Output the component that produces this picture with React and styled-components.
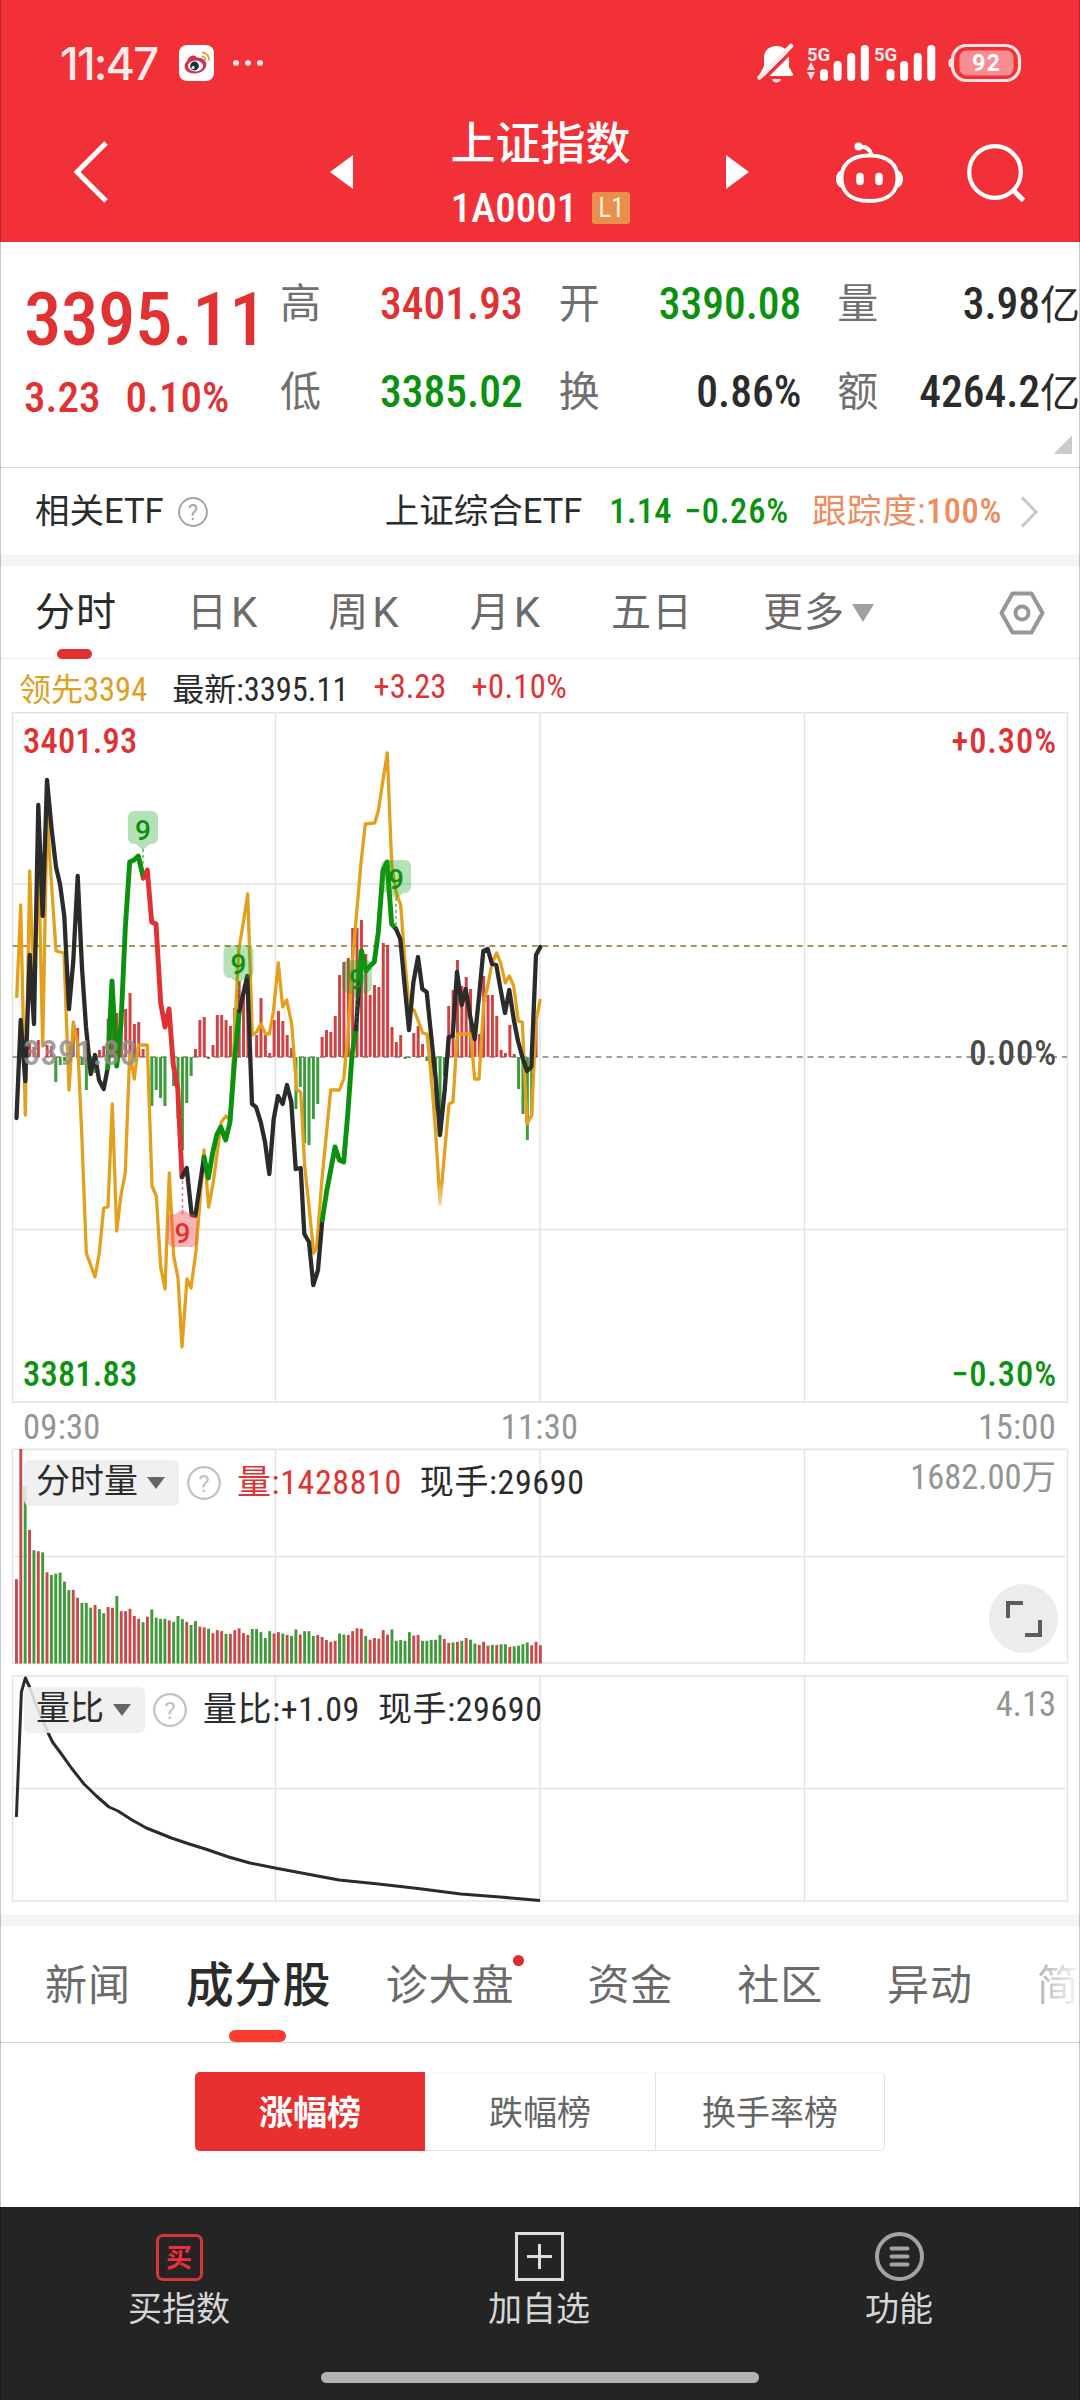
import React from 'react';
import styled, { createGlobalStyle } from 'styled-components';

const RED = '#e03133';
const GREEN = '#0a910e';
const INK = '#2b2b2b';
const GREY = '#959595';
const GRID = '#e3e3e3';

const GlobalStyle = createGlobalStyle`
  * {
    box-sizing: border-box;
  }

  body {
    margin: 0;
    background: #ffffff;
    font-family: 'Roboto Condensed', 'Noto Sans CJK SC', sans-serif;
    color: ${INK};
  }

  svg {
    display: block;
    flex: none;
  }
`;

const Screen = styled.div`
  position: relative;
  display: flex;
  flex-direction: column;
  width: 1080px;
  height: 2400px;
  overflow: hidden;
  white-space: nowrap;

  &::after {
    content: '';
    position: absolute;
    inset: 0;
    border: solid rgba(0, 0, 0, 0.22);
    border-width: 0 1px;
    pointer-events: none;
  }
`;

/* ---------- header ---------- */

const Header = styled.header`
  height: 242px;
  background: #f13037;
  color: #ffffff;
`;

const StatusBar = styled.div`
  display: flex;
  align-items: center;
  height: 110px;
  padding: 16px 58px 0 60px;
`;

const Clock = styled.span`
  width: 119px;
  font-family: Inter, Roboto, sans-serif;
  font-size: 45px;
  font-weight: 500;
  letter-spacing: -1.8px;
  color: #ffe9ea;
`;

const Dots = styled.span`
  display: flex;
  gap: 6px;
  margin-left: 19px;

  i {
    width: 6px;
    height: 6px;
    border-radius: 50%;
    background: #ffe3e4;
  }
`;

const StatusIcons = styled.div`
  display: flex;
  align-items: center;
  gap: 11px;
  margin-left: auto;
`;

const NavBar = styled.div`
  display: flex;
  align-items: center;
  height: 132px;
  padding: 0 50px 9px 74px;
`;

const Arrow = styled.span`
  width: 0;
  height: 0;
  border: solid transparent;
  border-width: 17px 0;
  ${({ $left }) =>
    $left
      ? 'border-right: 23px solid #fff; margin-left: 222px;'
      : 'border-left: 23px solid #fff; margin-right: 87px;'}
`;

const TitleBlock = styled.div`
  display: flex;
  flex-direction: column;
  align-items: center;
  width: 373px;
  padding-left: 2px;
  margin-top: 5px;
`;

const Title = styled.h1`
  margin: 0;
  font-size: 45px;
  font-weight: 500;
  line-height: 60px;
`;

const Code = styled.div`
  display: flex;
  align-items: center;
  gap: 15px;
  margin-top: 8px;
  font-size: 41px;
  font-weight: 500;
  line-height: 50px;
`;

const Level = styled.span`
  width: 38px;
  height: 32px;
  border-radius: 3px;
  background: #e8904b;
  color: #ffeede;
  font-size: 27px;
  font-weight: 400;
  line-height: 33px;
  text-align: center;
`;

const NavIcons = styled.div`
  display: flex;
  gap: 64px;
  padding-top: 3px;
`;

/* ---------- quote ---------- */

const Quote = styled.section`
  position: relative;
  display: flex;
  height: 226px;
  border-bottom: 1px solid #dcdcdc;
`;

const PriceColumn = styled.div`
  width: 280px;
  padding: 37px 0 0 24px;
  color: ${RED};
`;

const Price = styled.div`
  font-size: 75px;
  font-weight: 550;
  line-height: 80px;
  letter-spacing: -0.5px;
`;

const Change = styled.div`
  display: flex;
  gap: 25px;
  margin-top: 8px;
  font-size: 43px;
  font-weight: 480;
  line-height: 60px;
`;

const Stats = styled.div`
  flex: 1;
  display: grid;
  grid-template-columns: repeat(3, 1fr);
  grid-auto-rows: 88px;
  column-gap: 36px;
  padding-top: 19px;
`;

const Stat = styled.div`
  display: flex;
  justify-content: space-between;
  font-size: 43.5px;
  font-weight: 490;
  line-height: 88px;
  color: ${({ $color }) => $color};

  label {
    font-size: 41px;
    font-weight: 400;
    line-height: 87px;
    color: #707070;
  }
`;

const Unit = styled.span`
  font-size: 40px;
  font-weight: 400;
`;

const Corner = styled.i`
  position: absolute;
  right: 8px;
  bottom: 13px;
  width: 18px;
  height: 18px;
  background: linear-gradient(135deg, transparent 50%, #cccccc 50%);
`;

const EtfRow = styled.section`
  display: flex;
  align-items: center;
  height: 87px;
  padding: 0 42px 0 35px;
`;

const EtfName = styled.span`
  font-family: Roboto, 'Noto Sans CJK SC', sans-serif;
  font-size: 34.5px;
  line-height: 40px;
  margin: 0 ${({ $gap }) => $gap}px 2px ${({ $push }) => ($push ? 'auto' : 0)};
`;

const Figure = styled.span`
  font-size: 34.5px;
  font-weight: 480;
  line-height: 40px;
  letter-spacing: ${({ $track = 0.3 }) => $track}px;
  color: ${({ $color }) => $color};
  margin: 0 ${({ $gap = 0 }) => $gap}px 2px 0;

  em {
    font-style: normal;
    font-weight: 400;
  }
`;

const Band = styled.div`
  flex: none;
  height: 11px;
  background: #f4f4f4;
`;

/* ---------- period tabs ---------- */

const PeriodTabs = styled.nav`
  display: flex;
  align-items: center;
  gap: 70px;
  height: 93px;
  padding: 2px 35px 0 35px;
  border-bottom: 1px solid #ececec;
`;

const Period = styled.span`
  position: relative;
  display: flex;
  align-items: center;
  font-family: Roboto, 'Noto Sans CJK SC', sans-serif;
  font-size: 40px;
  line-height: 92px;
  letter-spacing: 1px;
  color: ${({ $active }) => ($active ? INK : '#6b6b6b')};

  &::after {
    content: '';
    display: ${({ $active }) => ($active ? 'block' : 'none')};
    position: absolute;
    left: 22px;
    bottom: 0;
    width: 35px;
    height: 10px;
    border-radius: 5px;
    background: #e43031;
  }

  b {
    margin-left: 3px;
    font-size: 42px;
    font-weight: 400;
  }
`;

const Caret = styled.i`
  border: solid transparent;
  border-width: ${({ $h }) => $h}px ${({ $w }) => $w / 2}px 0;
  border-top-color: ${({ $color }) => $color};
  margin-left: ${({ $gap }) => $gap}px;
`;

const SettingIcon = styled.svg`
  margin-left: auto;
`;

/* ---------- charts ---------- */

const Legend = styled.div`
  display: flex;
  align-items: center;
  gap: 25px;
  height: 53px;
  padding: 2px 0 0 19px;
  font-size: 32.5px;
`;

const LegendItem = styled.span`
  font-weight: 450;
  letter-spacing: ${({ $track = 0 }) => $track}px;
  color: ${({ $color }) => $color};

  em {
    font-size: 32px;
    font-style: normal;
    font-weight: 400;
  }
`;

const Axis = styled.div`
  display: flex;
  justify-content: space-between;
  align-items: center;
  height: 45px;
  padding: 2px 24px 0 23px;
  font-size: 34.5px;
  font-weight: 430;
  letter-spacing: 0.3px;
  color: ${GREY};
`;

const ChartBox = styled.div`
  position: relative;
  height: ${({ $height }) => $height}px;
  margin-bottom: ${({ $gap = 0 }) => $gap}px;
`;

const ChartHead = styled.div`
  position: absolute;
  top: 12px;
  left: 24px;
  right: 24px;
  display: flex;
  align-items: center;
  height: 46px;
  font-size: 34px;
  font-weight: 450;
  line-height: 46px;

  em {
    font-style: normal;
    font-weight: 400;
  }
`;

const Picker = styled.span`
  display: flex;
  align-items: center;
  height: 46px;
  padding: 0 14px 0 12px;
  margin-right: 8px;
  border-radius: 6px;
  background: rgba(238, 238, 238, 0.88);
  font-weight: 400;
  line-height: 43px;

  span {
    padding-bottom: 3px;
  }
`;

const Reading = styled.span`
  padding-bottom: 3px;
  margin-left: ${({ $left }) => $left}px;
  letter-spacing: 0.6px;
  color: ${({ $color = INK }) => $color};
`;

const Peak = styled.span`
  align-self: flex-start;
  margin-left: auto;
  line-height: 34px;
  font-size: 34.5px;
  font-weight: 420;
  color: ${GREY};
`;

const Expand = styled.button`
  position: absolute;
  right: 22px;
  bottom: 12px;
  display: grid;
  place-items: center;
  width: 69px;
  height: 69px;
  padding: 0;
  border: 0;
  border-radius: 50%;
  background: #ececec;
`;

/* ---------- lower part ---------- */

const SectionTabs = styled.nav`
  display: flex;
  align-items: center;
  gap: 64px;
  height: 117px;
  padding: 3px 0 0 45px;
  border-bottom: 1px solid #d5d5d5;
`;

const SectionTab = styled.span`
  position: relative;
  flex: none;
  margin: 0 ${({ $active, $dot }) => ($active ? '-9px' : $dot ? '9px' : 0)} 0
    ${({ $active }) => ($active ? '-9px' : 0)};
  font-size: ${({ $active }) => ($active ? 48 : 42)}px;
  font-weight: ${({ $active }) => ($active ? 500 : 400)};
  line-height: 113px;
  letter-spacing: ${({ $active }) => ($active ? 0.3 : 0.9)}px;
  color: ${({ $active }) => ($active ? INK : '#6b6b6b')};

  ${({ $fade }) =>
    $fade &&
    `
    background: linear-gradient(90deg, #b4b4b4, #f4f4f4 92%);
    background-clip: text;
    color: transparent;
  `}

  &::after {
    content: '';
    position: absolute;
    ${({ $active, $dot }) =>
      $active
        ? 'left: 43px; bottom: 0; width: 57px; height: 12px; border-radius: 6px; background: #fa3b30;'
        : $dot
          ? 'right: -10px; top: 26px; width: 11px; height: 11px; border-radius: 50%; background: #e02b2b;'
          : 'display: none;'}
  }
`;

const Ranking = styled.section`
  flex: 1;
  display: flex;
  justify-content: center;
  align-items: flex-start;
  padding-top: 29px;
`;

const Segment = styled.button`
  width: 230px;
  height: 79px;
  padding: 0 0 3px;
  border: 1px solid #e0e0e0;
  border-left-width: ${({ $last }) => ($last ? 1 : 0)}px;
  border-right-width: ${({ $last }) => ($last ? 1 : 0)}px;
  border-top-color: #f8f8f8;
  border-radius: ${({ $active, $last }) =>
    $active ? '5px 0 0 5px' : $last ? '0 5px 5px 0' : 0};
  background: ${({ $active }) => ($active ? '#e83031' : '#ffffff')};
  ${({ $active }) => $active && 'border-color: #e83031;'}
  color: ${({ $active }) => ($active ? '#ffffff' : '#666666')};
  font-family: inherit;
  font-size: 34px;
  font-weight: ${({ $active }) => ($active ? 700 : 400)};
`;

const BottomBar = styled.footer`
  height: 193px;
  background: #242424;
`;

const Actions = styled.div`
  display: grid;
  grid-template-columns: repeat(3, 1fr);
  height: 165px;
`;

const Action = styled.div`
  display: flex;
  flex-direction: column;
  align-items: center;
  gap: 7px;
  padding: 25px 2px 0 0;
  font-size: 34px;
  line-height: 42px;
  color: #d6d6d6;
`;

const BuyBadge = styled.span`
  width: 47px;
  height: 47px;
  margin: 2px 0 0;
  border: 3px solid #d5353c;
  border-radius: 7px;
  color: #ee2f3f;
  font-size: 26px;
  font-weight: 700;
  line-height: 42px;
  text-align: center;
`;

const HomeBar = styled.div`
  width: 438px;
  height: 11px;
  margin: 0 auto;
  border-radius: 6px;
  background: #b3b3b3;
`;

/* ---------- data ---------- */

const STATS = [
  { label: '高', value: '3401.93', color: RED },
  { label: '开', value: '3390.08', color: GREEN },
  { label: '量', value: '3.98', unit: '亿', color: INK },
  { label: '低', value: '3385.02', color: GREEN },
  { label: '换', value: '0.86%', color: INK },
  { label: '额', value: '4264.2', unit: '亿', color: INK },
];

const STEP = 4.366;
const FIRST = 16.5;

// the price line changes colour along each nine-turn run
const PRICE_RUNS = [
  [INK, '16.5,1118 20.7,1020 25.3,1081 29.7,955 34,1024 38.3,805 42.7,916 47,780 51.5,828 56,867 60,884 64.3,916 69,1009 73.3,961 77.7,876 82,968 86,1027 90.7,1074 95,1055 99,1080 103.7,1089 107.7,1068'],
  [GREEN, '107.7,1068 112,981 116.7,1066 121,1024 125.3,928 129.7,862 134,860 138.3,856 143.3,878'],
  [RED, '143.3,878 147.3,870 151.7,922 156,924 160.7,1003 165,1027 169,1009 173.3,1065 177.7,1088 182,1177'],
  [INK, '182,1177 186.7,1168 191.7,1215 195.3,1216 199.3,1189 204,1157'],
  [GREEN, '204,1157 208.3,1178 212.7,1153 216.7,1135 220.7,1127 225.7,1140 230,1122 234.3,1064 239.3,1011'],
  [INK, '239.3,1011 247.3,976 252,1104 256,1107 260.7,1122 265,1142 269.3,1174 273.7,1119 278,1096 282.7,1104 287,1085 291.3,1102 295.7,1169 300.7,1168 304.3,1234 309,1242 313.3,1285 318,1270 322.3,1220'],
  [GREEN, '322.3,1220 326.7,1191 330.7,1170 335,1147 339.3,1160 343.7,1162 348,1111 352,1055 356,1029'],
  [INK, '356,1029 361,960'],
  [GREEN, '359,977 361.5,951 366,971 370,966 374.3,962 378.3,932 383,870 387,862 391.7,924 396,929'],
  [INK, '396,929 400.3,939 404.7,986 409,1030 413.3,983 418,957 422.3,989 426.7,992 431.3,1037 435.7,1079 440,1135 444.7,1090 448.7,1037 452.7,1036 457,972 461.7,1005 465.7,989 470.3,1017 474.7,1039 479,997 483.3,951 487.7,949 492,964 496.3,965 500.7,990 505,1013 509.3,990 513.7,1019 518,1041 522.3,1057 527,1071 531.3,1067 536,955 540.3,947'],
];

const LEADING =
  '16.7,998 20.7,905 25.3,1115 29.7,871 34,1000 38.3,850 42.7,1046 47,815 51.7,887 56,951 64,953 69,1090 73.3,1022 77.7,1044 82,1140 86.3,1253 95,1277 99.3,1253 103.7,1208 108,1207 112.3,1104 116.7,1231 121,1195 125.3,1173 129.7,1053 134.3,1079 138.3,1045 147.3,1045 152,1186 156.3,1196 160.7,1267 165,1289 169.3,1173 173.7,1256 178,1278 182,1347 187,1279 191,1288 196,1251 204,1150 208.7,1207 213.3,1182 221.3,1122 226,1116 230,1120 234.3,1039 238.7,950 243.3,923 247.7,894 252.3,1035 256.7,1032 260.7,1024 265.7,1034 269.3,1034 273.3,1012 278.3,963 282.7,1007 286.7,1000 291.7,1024 296.7,1090 300.7,1092 304.7,1166 309.3,1209 313.7,1253 316.7,1247 321.7,1182 330.7,1090 339.3,1090 343.7,1079 348,1035 352.3,963 361,863 365.3,824 374.7,823 378.3,811 382.7,782 387.3,753 391.7,865 396,892 400.7,905 404.7,959 409.3,1008 414,1010 418.3,1021 422.7,1033 427,1034 431.3,1077 435.7,1133 440,1204 444.7,1151 449,1104 453,1102 457.3,1034 470.7,1034 474.7,1079 479,1079 483.7,1003 487.7,986 492,963 496.7,953 500.7,963 505.3,983 509.3,976 513.7,986 518.3,1021 522.3,1022 527,1124 531.7,1115 536,1021 540.3,999';

const MOMENTUM = [
  0, 0, 0, 14, 10, 17, 0, 12, 11, -25, -8, -4, 11, 22, 29, -8, -33, -13, -16, 7,
  11, 38, 40, 44, 29, 48, 64, 33, 35, 8, 0, -49, -33, -41, -49, 0, -29, -62, -93, -46,
  -19, 8, 37, 40, -2, 12, 42, 42, 37, 31, 49, 76, 67, 78, 0, 22, 59, 22, 4, 37,
  46, 36, 22, 9, -52, -30, -86, -88, -62, -47, 20, 27, 25, 41, 82, 95, 99, 129, 129, 137,
  103, 62, 72, 70, 114, 112, 30, 15, 22, -2, -1, 24, 31, 13, -4, -25, -54, -71, -19, 51,
  67, 97, 71, 80, 68, 18, 23, 81, 62, 62, 41, 7, 4, 32, 3, -32, -57, -83, -58, 36,
];

const VOLUME = [
  245, 623, 515, 388, 329, 326, 323, 265, 257, 261, 264, 238, 213, 214, 191, 176, 176, 162, 170, 158,
  146, 164, 162, 196, 152, 152, 159, 138, 130, 120, 136, 157, 133, 130, 130, 125, 121, 138, 129, 121,
  112, 123, 107, 105, 101, 88, 97, 94, 86, 86, 97, 102, 88, 83, 100, 100, 91, 74, 94, 87,
  91, 87, 83, 80, 99, 84, 94, 94, 80, 83, 77, 68, 63, 66, 87, 84, 83, 94, 102, 101,
  80, 69, 74, 72, 97, 84, 99, 66, 68, 66, 91, 81, 83, 66, 66, 68, 69, 83, 71, 60,
  61, 63, 66, 74, 69, 58, 54, 63, 52, 54, 54, 56, 56, 48, 50, 52, 56, 61, 53, 63, 53,
];

const VOLUME_SIDE =
  'rrgrgrgrgggggrrgggrggrrgrrrrrgrggggrgggrggrrgrrrgrrrrrgggggrrgrggrgggrrrrrggrrrrgrrrrrgggggrrgggggrrgrgrggrrrgrggrggggrrr';

const RATIO =
  '16.4,142 21.4,17 25.4,3 29.6,12 34,25 48.2,58 52.5,67 60.7,78 71.4,93 84,109 96.4,121 109,132 118,136 132,145 146.4,153 171.4,163 189.3,169 207,174.5 228.6,182 250,188 275,193 307,199 339,205 378.6,209 418,213.5 460.7,219 500,222 540,225.5';

const NINES = [
  { x: 143, top: 811, to: 878, color: GREEN },
  { x: 238.5, top: 945, to: 1011, color: GREEN },
  { x: 357, top: 960, to: 1029, color: GREEN },
  { x: 396, top: 860, to: 930, color: GREEN },
  { x: 182.5, top: 1214, to: 1177, color: RED, below: true },
];

const SECTION_TABS = [
  { text: '新闻' },
  { text: '成分股', active: true },
  { text: '诊大盘', dot: true },
  { text: '资金' },
  { text: '社区' },
  { text: '异动' },
  { text: '简', fade: true },
];

/* ---------- icons ---------- */

const WeiboIcon = () => (
  <svg width="35" height="36" viewBox="0 0 35 36">
    <rect width="35" height="36" rx="8" fill="#fff" />
    <ellipse cx="16.5" cy="20.5" rx="11" ry="8" fill="#cf3350" transform="rotate(-8 16.5 20.5)" />
    <path d="M8 16c2-6 8-7 10-3.500z" fill="#cf3350" />
    <ellipse cx="16.500" cy="21" rx="7.600" ry="5.400" fill="#fff" />
    <circle cx="15.500" cy="21" r="4.400" fill="#17343c" />
    <circle cx="14" cy="22.500" r="1.500" fill="#fff" />
    <path d="M23 7.500a7 7 0 0 1 7 8M23 11.500a3.500 3.500 0 0 1 3.500 4" fill="none" stroke="#e8a33a" strokeWidth="2" />
  </svg>
);

const BellOffIcon = () => (
  <svg width="39" height="41" viewBox="0 0 39 41">
    <path d="M19.500 3c-8 0-12.500 5-12.500 12v8l-4 8c0 1.500 1 2 2 2h29c1.500 0 2.500-1 2-2l-4-7v-9c0-7-4.500-12-12.500-12z" fill="#fff" />
    <path d="M15 36h9c-.500 2-2 3.500-4.500 3.500S15.500 38 15 36z" fill="#ffe3e4" />
    <path d="M4 39L38 5" stroke="#f13037" strokeWidth="3.500" />
    <path d="M2.500 34.500L34 3" stroke="#ffecec" strokeWidth="4.500" strokeLinecap="round" />
  </svg>
);

const Bars = ({ x }) => (
  <g fill="#fff">
    {[12, 20, 28, 36].map((h, i) => (
      <rect key={h} x={x + i * 13.6} y={38 - h} width="8" height={h} rx="4" />
    ))}
  </g>
);

const SignalIcon = () => (
  <svg width="129" height="40" viewBox="0 0 129 40">
    <g fill="#ffe9ea" fontFamily="Roboto, sans-serif" fontWeight="700" fontSize="18.500">
      <text x="0" y="18" textLength="23">5G</text>
      <text x="67" y="18" textLength="23">5G</text>
    </g>
    <path d="M0 27l4-8 4 8zM0 29l4 8 4-8z" fill="#ffe3e4" />
    <Bars x={13} />
    <Bars x={79.5} />
  </svg>
);

const BatteryIcon = () => (
  <svg width="75" height="40" viewBox="0 0 75 40">
    <path d="M5 15c-5 0-5 10 0 10z" fill="#ffe3e4" />
    <rect x="5.500" y="2.500" width="67" height="35" rx="14" fill="none" stroke="#ffe3e4" strokeWidth="3.200" />
    <rect x="12.500" y="7.500" width="54" height="25" rx="7" fill="#f98e92" />
    <text x="39" y="28.300" textAnchor="middle" fill="#fff" fontFamily="Roboto, sans-serif" fontWeight="700" fontSize="23.500" textLength="28">92</text>
  </svg>
);

const BackIcon = () => (
  <svg width="34" height="62" viewBox="0 0 34 62" fill="none" stroke="#fff" strokeWidth="5">
    <path d="M32 2L3 31l29 29" />
  </svg>
);

const RobotIcon = () => (
  <svg width="67" height="62" viewBox="0 0 67 62" fill="none" stroke="#fff" strokeWidth="4">
    <path d="M33.500 13.500c19 0 28 9 28 22.500S53 59 33.500 59 5.500 49.500 5.500 36s9-22.500 28-22.500z" />
    <path d="M23 5c7-1 11 2 12.500 8" />
    <circle cx="22.500" cy="4.500" r="4" fill="#fff" stroke="none" />
    <path d="M6 28c-8 2-8 16 0 18zM61 28c8 2 8 16 0 18z" fill="#fff" stroke="none" />
    <path d="M24 34.500v5M43 34.500v5" strokeWidth="7.500" strokeLinecap="round" />
  </svg>
);

const SearchIcon = () => (
  <svg width="60" height="62" viewBox="0 0 60 62" fill="none" stroke="#fff" strokeWidth="4.200">
    <circle cx="28" cy="30" r="25.800" />
    <path d="M45.500 47.500l11 11" strokeWidth="5" />
  </svg>
);

const HelpIcon = ({ size = 34, color = '#c2c2c2' }) => (
  <svg width={size} height={size} viewBox="0 0 34 34">
    <circle cx="17" cy="17" r="15.800" fill="none" stroke={color} strokeWidth="2.200" />
    <text x="17" y="25.500" textAnchor="middle" fill={color} fontFamily="Roboto, sans-serif" fontSize="24">?</text>
  </svg>
);

/* ---------- chart parts ---------- */

const Grid = ({ top, bottom, rows }) => (
  <g stroke={GRID} strokeWidth="1.500" fill="none">
    <rect x="12.500" y={top} width="1055" height={bottom - top} />
    {[275.5, 540, 804.5].map((x) => (
      <path key={x} d={`M${x} ${top}V${bottom}`} />
    ))}
    {rows.map((y) => (
      <path key={y} d={`M12.5 ${y}H1067.5`} />
    ))}
  </g>
);

const Nine = ({ x, top, to, color, below }) => (
  <g>
    <path d={`M${x} ${below ? top : top + 38}V${to}`} stroke={color} strokeOpacity="0.700" strokeDasharray="3 3" strokeWidth="1.400" />
    <g fill={below ? '#f4545c' : '#1fa522'} fillOpacity={below ? 0.45 : 0.33}>
      <rect x={x - 15} y={top} width="30" height="33" rx="6" />
      <path d={below ? `M${x - 7} ${top}l7-5 7 5z` : `M${x - 7} ${top + 33}l7 6 7-6z`} />
    </g>
    <text x={x} y={top + 29} textAnchor="middle" fill={color} fontFamily="Roboto, sans-serif" fontSize="28" fontWeight="500">
      9
    </text>
  </g>
);

const PriceChart = () => (
  <svg width="1080" height="691" viewBox="0 712 1080 691">
    <defs>
      <linearGradient id="tip" x1="0" y1="0" x2="0" y2="1">
        <stop offset="0" stopColor="#fff" stopOpacity="0" />
        <stop offset="1" stopColor="#fff" stopOpacity="0.900" />
      </linearGradient>
    </defs>
    <Grid top={712.7} bottom={1402} rows={[884, 1229.5]} />
    <path d="M12.500 946H1067" stroke="#a8925f" strokeWidth="1.800" strokeDasharray="5.800 4.800" />
    <path d="M12.500 1057H1067" stroke="#a0a0a0" strokeWidth="1.800" strokeDasharray="5.800 4.800" />
    {MOMENTUM.map((v, i) => (
      <rect
        key={i}
        x={FIRST + i * STEP - 1.5}
        y={v > 0 ? 1057 - v : 1057}
        width="3"
        height={Math.abs(v)}
        fill={v > 0 ? '#cf4345' : '#3d9b3b'}
      />
    ))}
    <polyline points={LEADING} fill="none" stroke="#e2a01c" strokeWidth="3.300" strokeLinejoin="round" />
    <rect x="425" y="1180" width="34" height="38" fill="url(#tip)" />
    {PRICE_RUNS.map(([color, points]) => (
      <polyline
        key={points}
        points={points}
        fill="none"
        stroke={color}
        strokeWidth={color === INK ? 4.3 : 4.9}
        strokeLinejoin="round"
        strokeLinecap="round"
      />
    ))}
    {NINES.map((n) => (
      <Nine key={n.x} {...n} />
    ))}
    <g fontSize="34.500" fontWeight="470" letterSpacing="0.200">
      <text x="23" y="752.500" fill={RED}>3401.93</text>
      <text x="23" y="1064.500" fill="#8f8f8f" fillOpacity="0.850">3391.88</text>
      <text x="23" y="1385.500" fill={GREEN}>3381.83</text>
      <g textAnchor="end" letterSpacing="0.900">
        <text x="1057" y="752.500" fill={RED}>+0.30%</text>
        <text x="1057" y="1064.500" fill="#4a4a4a">0.00%</text>
        <text x="1057" y="1385.500" fill={GREEN}>−0.30%</text>
      </g>
    </g>
  </svg>
);

const VolumeChart = () => (
  <svg width="1080" height="217" viewBox="0 0 1080 217">
    <Grid top={1.3} bottom={215} rows={[108.5]} />
    {VOLUME.map((v, i) => (
      <rect
        key={i}
        x={FIRST + i * STEP - 1.5}
        y={215.5 - (v / 623) * 214.5}
        width="2.900"
        height={(v / 623) * 214.5}
        fill={VOLUME_SIDE[i] === 'r' ? '#c84a4b' : '#3f9a3a'}
      />
    ))}
  </svg>
);

const RatioChart = () => (
  <svg width="1080" height="227" viewBox="0 0 1080 227">
    <Grid top={1} bottom={226} rows={[113.5]} />
    <polyline points={RATIO} fill="none" stroke={INK} strokeWidth="3" strokeLinejoin="round" />
  </svg>
);

/* ---------- page ---------- */

const App = () => (
  <Screen>
    <GlobalStyle />
    <Header>
      <StatusBar>
        <Clock>11:47</Clock>
        <WeiboIcon />
        <Dots>
          <i />
          <i />
          <i />
        </Dots>
        <StatusIcons>
          <BellOffIcon />
          <SignalIcon />
          <BatteryIcon />
        </StatusIcons>
      </StatusBar>
      <NavBar>
        <BackIcon />
        <Arrow $left />
        <TitleBlock>
          <Title>上证指数</Title>
          <Code>
            1A0001 <Level>L1</Level>
          </Code>
        </TitleBlock>
        <Arrow />
        <NavIcons>
          <RobotIcon />
          <SearchIcon />
        </NavIcons>
      </NavBar>
    </Header>

    <Quote>
      <PriceColumn>
        <Price>3395.11</Price>
        <Change>
          <span>3.23</span>
          <span>0.10%</span>
        </Change>
      </PriceColumn>
      <Stats>
        {STATS.map((s) => (
          <Stat key={s.label} $color={s.color}>
            <label>{s.label}</label>
            <span>
              {s.value}
              {s.unit && <Unit>{s.unit}</Unit>}
            </span>
          </Stat>
        ))}
      </Stats>
      <Corner />
    </Quote>

    <EtfRow>
      <EtfName $gap={14}>相关ETF</EtfName>
      <HelpIcon size={30} color="#a3a3a3" />
      <EtfName $push $gap={27}>
        上证综合ETF
      </EtfName>
      <Figure $color={GREEN} $gap={12}>
        1.14
      </Figure>
      <Figure $color={GREEN} $gap={23} $track={0.8}>
        −0.26%
      </Figure>
      <Figure $color="#ec8c5f" $gap={18} $track={0.6}>
        <em>跟踪度:</em>100%
      </Figure>
      <svg width="18" height="32" viewBox="0 0 18 32" fill="none" stroke="#c8c8c8" strokeWidth="3">
        <path d="M2 1.500L16 16 2 30.500" />
      </svg>
    </EtfRow>

    <Band />

    <PeriodTabs>
      <Period $active>分时</Period>
      <Period>
        日<b>K</b>
      </Period>
      <Period>
        周<b>K</b>
      </Period>
      <Period>
        月<b>K</b>
      </Period>
      <Period>五日</Period>
      <Period>
        更多
        <Caret $w={22} $h={18} $gap={7} $color="#a0a0a0" />
      </Period>
      <SettingIcon width="46" height="44" viewBox="0 0 46 44" fill="none" stroke="#979797" strokeWidth="4" strokeLinejoin="round">
        <path d="M13.500 2.500h19L43.500 22l-11 19.500h-19L2.500 22z" />
        <circle cx="23" cy="22" r="6.500" />
      </SettingIcon>
    </PeriodTabs>

    <Legend>
      <LegendItem $color="#e0a01f">
        <em>领先</em>3394
      </LegendItem>
      <LegendItem $color={INK}>
        <em>最新:</em>3395.11
      </LegendItem>
      <LegendItem $color={RED}>+3.23</LegendItem>
      <LegendItem $color={RED} $track={0.4}>
        +0.10%
      </LegendItem>
    </Legend>

    <ChartBox $height={691}>
      <PriceChart />
    </ChartBox>

    <Axis>
      <span>09:30</span>
      <span>11:30</span>
      <span>15:00</span>
    </Axis>

    <ChartBox $height={217} $gap={10}>
      <VolumeChart />
      <ChartHead>
        <Picker>
          <span>分时量</span>
          <Caret $w={18} $h={12} $gap={9} $color="#666" />
        </Picker>
        <HelpIcon />
        <Reading $left={16} $color={RED}>
          <em>量:</em>1428810
        </Reading>
        <Reading $left={18}>
          <em>现手:</em>29690
        </Reading>
        <Peak>1682.00万</Peak>
      </ChartHead>
      <Expand>
        <svg width="36" height="36" viewBox="0 0 36 36" fill="none" stroke="#5c5c5c" strokeWidth="4">
          <path d="M2 17V2h15M34 19v15H19" />
        </svg>
      </Expand>
    </ChartBox>

    <ChartBox $height={227} $gap={13}>
      <RatioChart />
      <ChartHead>
        <Picker>
          <span>量比</span>
          <Caret $w={18} $h={12} $gap={9} $color="#666" />
        </Picker>
        <HelpIcon />
        <Reading $left={16}>
          <em>量比:</em>+1.09
        </Reading>
        <Reading $left={18}>
          <em>现手:</em>29690
        </Reading>
        <Peak>4.13</Peak>
      </ChartHead>
    </ChartBox>

    <Band />

    <SectionTabs>
      {SECTION_TABS.map((t) => (
        <SectionTab key={t.text} $active={t.active} $dot={t.dot} $fade={t.fade}>
          {t.text}
        </SectionTab>
      ))}
    </SectionTabs>

    <Ranking>
      <Segment $active>涨幅榜</Segment>
      <Segment>跌幅榜</Segment>
      <Segment $last>换手率榜</Segment>
    </Ranking>

    <BottomBar>
      <Actions>
        <Action>
          <BuyBadge>买</BuyBadge>
          买指数
        </Action>
        <Action>
          <svg width="49" height="49" viewBox="0 0 49 49" fill="none" stroke="#dedede" strokeWidth="3">
            <rect x="1.500" y="1.500" width="46" height="46" />
            <path d="M24.500 12v25M12 24.500h25" />
          </svg>
          加自选
        </Action>
        <Action>
          <svg width="49" height="49" viewBox="0 0 49 49" fill="none" stroke="#a3a3a3" strokeWidth="4" strokeLinecap="round">
            <circle cx="24.500" cy="24.500" r="22.500" />
            <path d="M16.500 16.500h16M16.500 24.500h16M16.500 32.500h16" />
          </svg>
          功能
        </Action>
      </Actions>
      <HomeBar />
    </BottomBar>
  </Screen>
);

export default App;
